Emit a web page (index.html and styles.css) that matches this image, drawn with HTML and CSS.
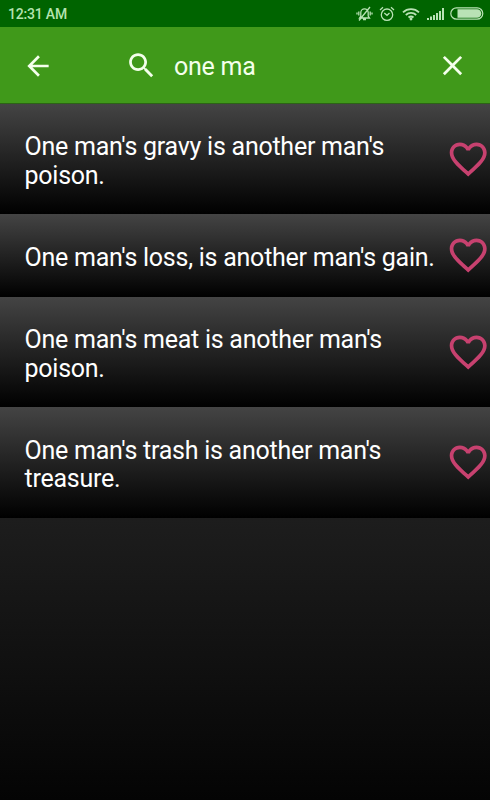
FILE: index.html
```
<!DOCTYPE html>
<html lang="en">
<head>
    <meta charset="utf-8">
    <title>Proverbs</title>
    <link rel="stylesheet" href="styles.css">
</head>
<body>
    <svg width="0" height="0" class="symbols">
        <symbol id="heart" viewBox="0 0 24 24">
            <path d="M16.5 3c-1.74 0-3.41.81-4.5 2.09C10.91 3.81 9.24 3 7.5 3 4.42 3 2 5.42 2 8.5c0 3.78 3.4 6.86 8.55 11.54L12 21.35l1.45-1.32C18.6 15.36 22 12.28 22 8.5 22 5.42 19.58 3 16.5 3zm-4.4 15.55l-.1.1-.1-.1C7.14 14.24 4 11.39 4 8.5 4 6.5 5.5 5 7.5 5c1.54 0 3.04.99 3.57 2.36h1.87C13.46 5.99 14.96 5 16.5 5c2 0 3.5 1.5 3.5 3.5 0 2.89-3.14 5.74-7.9 10.05z"/>
        </symbol>
    </svg>

    <div class="status-bar">
        <span class="clock">12:31 AM</span>
        <div class="status-icons">
            <!-- muted bell -->
            <svg class="mute" width="17" height="16" viewBox="0 0 17 16">
                <path d="M3.5 12h10l-1.3-2V6.5a3.7 3.7 0 0 0-7.4 0V10zM7 13.5h3M2.8 5.5v4M1 6.5v2M14.2 5.5v4M16 6.5v2M3 14.5L14 1"/>
            </svg>
            <!-- alarm -->
            <svg class="alarm" width="16" height="16" viewBox="0 0 16 16">
                <circle cx="8" cy="8.7" r="5.7"/>
                <path d="M5.3 7l2.7 2.3L10.5 7M1 4l3-2.7M15 4l-3-2.7"/>
            </svg>
            <!-- wifi -->
            <svg class="wifi" width="18" height="14" viewBox="0 0 18 14">
                <path d="M1 5.3a11.5 11.5 0 0 1 16 0M3.8 8a7.5 7.5 0 0 1 10.4 0M6.5 10.5a4 4 0 0 1 5 0"/>
                <circle cx="9" cy="12" r=".8"/>
            </svg>
            <!-- signal -->
            <svg class="signal" width="17" height="12" viewBox="0 0 17 12">
                <path d="M0 10h2v2H0zM3 8.5h2V12H3zM6 7h2v5H6zM9 5h2v7H9zM12 3h2v9h-2zM15 0h2v12h-2z"/>
            </svg>
            <!-- battery -->
            <svg class="battery" width="34" height="13" viewBox="0 0 34 13">
                <rect class="shell" x=".8" y=".8" width="32" height="11.4" rx="5.7"/>
                <path d="M7.5 2.2H27a4.3 4.3 0 0 1 0 8.6H7.5z"/>
            </svg>
        </div>
    </div>

    <div class="search-bar">
        <svg class="back" viewBox="0 0 24 24"><path d="M20 11H7.83l5.59-5.59L12 4l-8 8 8 8 1.41-1.41L7.83 13H20v-2z"/></svg>
        <svg class="search" viewBox="0 0 24 24"><path d="M15.5 14h-.79l-.28-.27C15.41 12.59 16 11.11 16 9.5 16 5.91 13.09 3 9.5 3S3 5.91 3 9.5 5.91 16 9.5 16c1.61 0 3.09-.59 4.23-1.57l.27.28v.79l5 4.99L20.49 19l-4.99-5zm-6 0C7.01 14 5 11.99 5 9.5S7.01 5 9.5 5 14 7.01 14 9.5 11.99 14 9.5 14z"/></svg>
        <span class="query">one ma</span>
        <svg class="close" viewBox="0 0 24 24"><path d="M19 6.41L17.59 5 12 10.59 6.41 5 5 6.41 10.59 12 5 17.59 6.41 19 12 13.41 17.59 19 19 17.59 13.41 12z"/></svg>
    </div>

    <ul class="results">
        <li>
            <p>One man's gravy is another man's poison.</p>
            <svg class="heart"><use href="#heart"/></svg>
        </li>
        <li>
            <p>One man's loss, is another man's gain.</p>
            <svg class="heart"><use href="#heart"/></svg>
        </li>
        <li>
            <p>One man's meat is another man's poison.</p>
            <svg class="heart"><use href="#heart"/></svg>
        </li>
        <li>
            <p>One man's trash is another man's treasure.</p>
            <svg class="heart"><use href="#heart"/></svg>
        </li>
    </ul>
</body>
</html>
```

FILE: styles.css
```
*{
    box-sizing: border-box;
}

body{
    margin: 0;
    height: 800px;
    overflow: hidden;
    font-family: Roboto, "Liberation Sans", sans-serif;
    background: linear-gradient(#444, #1d1d1d 65%, #040404);
}

.symbols{
    display: none;
}

.status-bar{
    display: flex;
    justify-content: space-between;
    align-items: center;
    height: 27px;
    padding: 0 6px 0 8px;
    background-color: #006400;
    color: #b5e3b0;
}

.clock{
    font-size: 14px;
    font-weight: 500;
    letter-spacing: -.2px;
    line-height: 27px;
    padding-top: 1px;
}

.status-icons{
    display: flex;
    align-items: center;
    fill: #b9e2b5;
}

.mute, .alarm, .wifi{
    stroke: #b9e2b5;
    stroke-width: 1.3;
}

.mute, .alarm, .wifi path{
    fill: none;
}

.alarm{
    margin-left: 6px;
}

.wifi{
    margin-left: 7px;
}

.wifi path{
    stroke-width: 1.8;
}

.signal{
    margin-left: 7px;
    margin-top: 1px;
}

.battery{
    margin-left: 6px;
}

.shell{
    fill: none;
    stroke: #b9e2b5;
    stroke-width: 1.2;
}

.search-bar{
    display: flex;
    align-items: center;
    height: 77px;
    padding: 1px 21px 0 22px;
    background-color: #40991a;
    border-bottom: 1px solid #2c6316;
    color: #f4ffec;
    fill: #f4ffec;
}

.back{
    width: 32px;
    height: 32px;
}

.search{
    width: 33px;
    height: 33px;
    margin-left: 71px;
}

.query{
    flex: 1;
    margin-left: 16px;
    padding-top: 2px;
    font-size: 25px;
    letter-spacing: -.25px;
}

.close{
    width: 33px;
    height: 33px;
}

.results{
    margin: 0;
    padding: 0;
    list-style-type: none;
}

.results li{
    display: flex;
    align-items: center;
    padding: 24px 0 23.7px 24.5px;
    background: linear-gradient(#444, #000);
}

.results p{
    flex: 1;
    margin: 0;
    padding-top: 5.3px;
    color: #fff;
    font-size: 25px;
    letter-spacing: -.25px;
    line-height: 28.7px;
}

.results li:nth-child(2){
    padding-bottom: 24.5px;
}

.heart{
    flex: none;
    width: 44.4px;
    height: 44.4px;
    margin: -10px -.8px -10px 0;
    fill: #c7416f;
}
```
